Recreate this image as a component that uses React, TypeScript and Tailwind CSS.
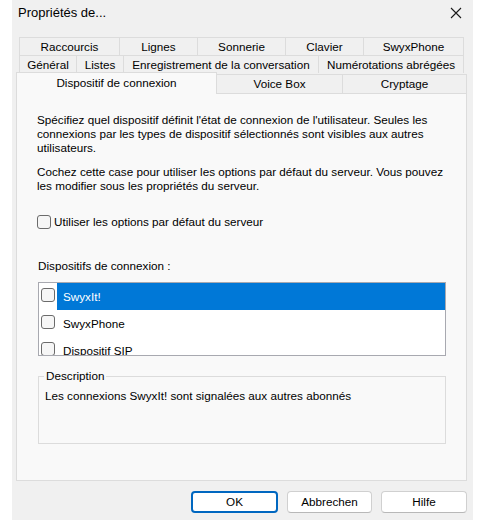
import React, { useState } from 'react';

const font = { fontFamily: '"Liberation Sans", Arial, sans-serif' };

const row1 = [
  { label: 'Raccourcis', w: 'w-[100px]' },
  { label: 'Lignes', w: 'w-[78px]' },
  { label: 'Sonnerie', w: 'w-[88px]' },
  { label: 'Clavier', w: 'w-[78px]' },
  { label: 'SwyxPhone', w: 'w-[101px]' },
];

const row2 = [
  { label: 'Général', w: 'w-[57px]' },
  { label: 'Listes', w: 'w-[47px]' },
  { label: 'Enregistrement de la conversation', w: 'w-[195px]' },
  { label: 'Numérotations abrégées', w: 'w-[146px]' },
];

const devices = ['SwyxIt!', 'SwyxPhone', 'Dispositif SIP'];

function Check({ checked = false }: { checked?: boolean }) {
  return (
    <span className="inline-block w-[14px] h-[14px] shrink-0 rounded-[3px] border border-[#6b6b6b] bg-[#f6f6f6]">
      {checked && <span className="block w-full h-full bg-[#0067c0]" />}
    </span>
  );
}

export default function App() {
  const [selected, setSelected] = useState(0);
  const [useDefaults, setUseDefaults] = useState(false);

  return (
    <div className="w-[481px] h-[527px] bg-white text-[11.7px] text-black" style={font}>
      <div className="ml-[12px] w-[461px] h-[520px] bg-[#f0f0f0] flex flex-col">
        {/* Title bar */}
        <div className="h-[25px] flex items-center justify-between pl-[6px] pr-[11px]">
          <span className="text-[13px] leading-none">Propriétés de...</span>
          <svg width="12" height="12" viewBox="0 0 12 12" className="text-[#1a1a1a]">
            <path d="M1 1 L11 11 M11 1 L1 11" stroke="currentColor" strokeWidth="1.1" />
          </svg>
        </div>

        {/* Tabs */}
        <div className="mt-[12px] flex flex-col">
          <div className="ml-[7px] flex h-[18px]">
            {row1.map((t, i) => (
              <div
                key={t.label}
                className={`${t.w} h-full flex items-center justify-center border-t border-l border-[#dcdcdc] bg-[#f0f0f0] ${i === row1.length - 1 ? 'border-r' : ''}`}
              >
                {t.label}
              </div>
            ))}
          </div>
          <div className="ml-[7px] flex h-[18px]">
            {row2.map((t, i) => (
              <div
                key={t.label}
                className={`${t.w} h-full flex items-center justify-center border-t border-l border-[#dcdcdc] bg-[#f0f0f0] ${i === row2.length - 1 ? 'border-r' : ''}`}
              >
                {t.label}
              </div>
            ))}
          </div>
          <div className="ml-[4px] flex items-start h-[20px]">
            <div className="relative z-10 -mt-px w-[201px] h-[22px] flex items-center justify-center pb-[2px] border-t border-l border-r border-[#dcdcdc] bg-[#f9f9f9]">
              Dispositif de connexion
            </div>
            <div className="mt-px w-[126px] h-[19px] flex items-center justify-center border-t border-r border-[#dcdcdc] bg-[#f0f0f0]">
              Voice Box
            </div>
            <div className="mt-px w-[124px] h-[19px] flex items-center justify-center border-t border-r border-[#dcdcdc] bg-[#f0f0f0]">
              Cryptage
            </div>
          </div>
        </div>

        {/* Panel */}
        <div className="ml-[4px] w-[451px] h-[388px] border border-[#dcdcdc] bg-[#f9f9f9] pl-[20px] pt-[19px] leading-[14px]">
          <p className="w-[412px]">
            Spécifiez quel dispositif définit l'état de connexion de l'utilisateur. Seules les connexions par les types de dispositif sélectionnés sont visibles aux autres utilisateurs.
          </p>
          <p className="w-[412px] mt-[10px]">
            Cochez cette case pour utiliser les options par défaut du serveur. Vous pouvez les modifier sous les propriétés du serveur.
          </p>

          <label
            className="mt-[22px] flex items-center gap-[3px] h-[14px] cursor-default"
            onClick={() => setUseDefaults(!useDefaults)}
          >
            <Check checked={useDefaults} />
            <span>Utiliser les options par défaut du serveur</span>
          </label>

          <div className="mt-[30px] ml-[1px]">Dispositifs de connexion :</div>

          {/* List */}
          <div className="mt-[9px] ml-[1px] w-[408px] h-[74px] border border-[#a8a9b0] bg-white overflow-hidden">
            {devices.map((d, i) => (
              <div key={d} className="flex items-center h-[27px]" onClick={() => setSelected(i)}>
                <div className="pl-[2px] w-[17px]">
                  <Check />
                </div>
                <div className={`ml-[1px] flex-1 h-full flex items-center pl-[6px] ${selected === i ? 'bg-[#0078d7] text-white' : ''}`}>
                  {d}
                </div>
              </div>
            ))}
          </div>

          {/* Description group */}
          <div className="relative mt-[20px] ml-[1px] w-[408px] h-[68px] border border-[#dcdcdc]">
            <span className="absolute -top-[8px] left-[5px] px-[2px] bg-[#f9f9f9]">Description</span>
            <div className="pt-[12px] pl-[6px]">Les connexions SwyxIt! sont signalées aux autres abonnés</div>
          </div>
        </div>

        {/* Buttons */}
        <div className="mt-[10px] flex justify-end gap-[9px] pr-[6px]">
          <button className="w-[87px] h-[22px] rounded-[4px] border-2 border-[#0067c0] bg-white">OK</button>
          <button className="w-[85px] h-[22px] rounded-[4px] border border-[#d0d0d0] border-b-[#b8b8b8] bg-white">Abbrechen</button>
          <button className="w-[86px] h-[22px] rounded-[4px] border border-[#d0d0d0] border-b-[#b8b8b8] bg-white">Hilfe</button>
        </div>
      </div>
    </div>
  );
}
